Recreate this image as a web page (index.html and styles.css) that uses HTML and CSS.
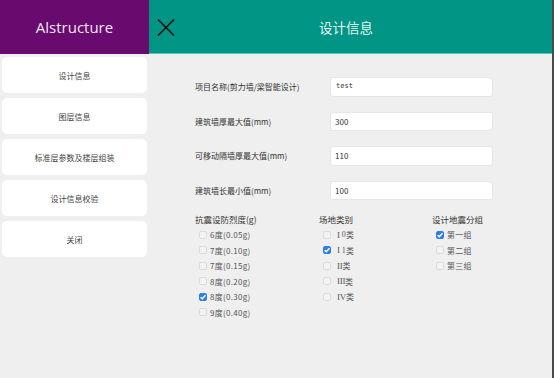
FILE: index.html
```html
<!DOCTYPE html>
<html lang="zh">
<head>
<meta charset="utf-8">
<link rel="stylesheet" href="styles.css">
</head>
<body>
<div class="app">
  <div class="brand">Alstructure</div>
  <div class="topbar">
    <svg class="close" width="18" height="17" viewBox="0 0 18 17"><path d="M1 0.5 L17 16.5 M17 0.5 L1 16.5" stroke="#111" stroke-width="1.6" fill="none"/></svg>
    <div class="title">设计信息</div>
  </div>
  <nav class="side">
    <div class="nav-btn">设计信息</div>
    <div class="nav-btn">图层信息</div>
    <div class="nav-btn">标准层参数及楼层组装</div>
    <div class="nav-btn">设计信息校验</div>
    <div class="nav-btn">关闭</div>
  </nav>
  <main class="content">
    <div class="form">
      <label class="lbl">项目名称(剪力墙/梁智能设计)</label>
      <div class="input mono">test</div>
      <label class="lbl">建筑墙厚最大值(mm)</label>
      <div class="input">300</div>
      <label class="lbl">可移动隔墙厚最大值(mm)</label>
      <div class="input">110</div>
      <label class="lbl">建筑墙长最小值(mm)</label>
      <div class="input">100</div>
    </div>
    <div class="groups">
      <div class="group g1">
        <div class="gtitle">抗震设防烈度(g)</div>
        <div class="opt"><span class="cb"></span>6度(0.05g)</div>
        <div class="opt"><span class="cb"></span>7度(0.10g)</div>
        <div class="opt"><span class="cb"></span>7度(0.15g)</div>
        <div class="opt"><span class="cb"></span>8度(0.20g)</div>
        <div class="opt"><span class="cb on"><svg width="8" height="8" viewBox="0 0 8 8"><path d="M1.6 4.2 L3.3 5.8 L6.5 2.2" stroke="#fff" stroke-width="1.4" fill="none"/></svg></span>8度(0.30g)</div>
        <div class="opt"><span class="cb"></span>9度(0.40g)</div>
      </div>
      <div class="group g2">
        <div class="gtitle">场地类别</div>
        <div class="opt"><span class="cb"></span><span class="roman">I</span><span class="num">0</span>类</div>
        <div class="opt"><span class="cb on"><svg width="8" height="8" viewBox="0 0 8 8"><path d="M1.6 4.2 L3.3 5.8 L6.5 2.2" stroke="#fff" stroke-width="1.4" fill="none"/></svg></span><span class="roman">I</span><span class="num">1</span>类</div>
        <div class="opt"><span class="cb"></span><span class="roman">II</span>类</div>
        <div class="opt"><span class="cb"></span><span class="roman">III</span>类</div>
        <div class="opt"><span class="cb"></span><span class="roman">IV</span>类</div>
      </div>
      <div class="group g3">
        <div class="gtitle">设计地震分组</div>
        <div class="opt"><span class="cb on"><svg width="8" height="8" viewBox="0 0 8 8"><path d="M1.6 4.2 L3.3 5.8 L6.5 2.2" stroke="#fff" stroke-width="1.4" fill="none"/></svg></span>第一组</div>
        <div class="opt"><span class="cb"></span>第二组</div>
        <div class="opt"><span class="cb"></span>第三组</div>
      </div>
    </div>
  </main>
</div>
</body>
</html>
```

FILE: styles.css
```css
html, body {
  margin: 0;
  padding: 0;
}
body {
  width: 554px;
  height: 378px;
  overflow: hidden;
  background: #efefef;
  font-family: "Noto Sans CJK SC", "Noto Sans", sans-serif;
  color: #333;
}
.app {
  display: grid;
  grid-template-columns: 149px 403px;
  grid-template-rows: 54px 324px;
  width: 552px;
  height: 378px;
  border-right: 2px solid #4a4a4a;
}
.brand {
  background: #680a6e;
  color: #f2e8f2;
  font-family: "Open Sans", "Noto Sans", sans-serif;
  font-size: 15px;
  display: flex;
  align-items: center;
  justify-content: center;
  padding-bottom: 1px;
  box-sizing: border-box;
}
.topbar {
  background: #009584;
  border-bottom: 1px solid #5fc2b5;
  box-sizing: border-box;
  display: flex;
  align-items: center;
  padding-left: 8px;
}
.close {
  display: block;
  margin-top: 1px;
}
.title {
  color: #e8f6f4;
  font-size: 13.5px;
  margin-left: 144px;
}
.side {
  display: flex;
  flex-direction: column;
  gap: 5px;
  padding: 3px 2px 0 2px;
}
.nav-btn {
  height: 36px;
  background: #fff;
  border-radius: 5px;
  display: flex;
  align-items: center;
  justify-content: center;
  font-size: 8px;
  color: #444;
}
.content {
  padding: 23px 0 0 46px;
}
.form {
  display: grid;
  grid-template-columns: 135px 163px;
  row-gap: 15px;
  align-items: center;
}
.lbl {
  font-size: 8px;
  color: #333;
}
.input {
  height: 19.5px;
  background: #fff;
  border: 1px solid #e6e6e6;
  border-radius: 3px;
  box-sizing: border-box;
  font-size: 8px;
  line-height: 17.5px;
  padding-left: 4px;
  color: #333;
}
.input.mono {
  font-family: "DejaVu Sans Mono", monospace;
  font-size: 7px;
  padding-left: 5px;
}
.groups {
  display: flex;
  margin-top: 13px;
}
.group {
  display: flex;
  flex-direction: column;
}
.g1 { width: 124px; }
.g2 { width: 113px; }
.gtitle {
  font-size: 8.5px;
  height: 13px;
  line-height: 13px;
  color: #333;
  margin-bottom: 1px;
}
.opt {
  display: flex;
  align-items: center;
  height: 15.5px;
  font-size: 8px;
  color: #555;
  padding-left: 4px;
  letter-spacing: 0.3px;
}
.cb {
  width: 8px;
  height: 8px;
  box-sizing: border-box;
  border: 1px solid #dcdcdc;
  border-radius: 2px;
  background: #f3f3f3;
  margin-right: 3px;
  display: flex;
  align-items: center;
  justify-content: center;
  flex: none;
}
.cb.on {
  background: #2f7ee6;
  border-color: #2f7ee6;
}
.cb svg {
  display: block;
  flex: none;
}
.g2 .cb { margin-right: 6px; }
.roman {
  font-family: "Liberation Serif", serif;
  font-size: 9px;
  letter-spacing: -0.3px;
  color: #555;
}
.num {
  font-family: "Liberation Serif", serif;
  font-size: 8px;
  margin-left: 2px;
}
```
